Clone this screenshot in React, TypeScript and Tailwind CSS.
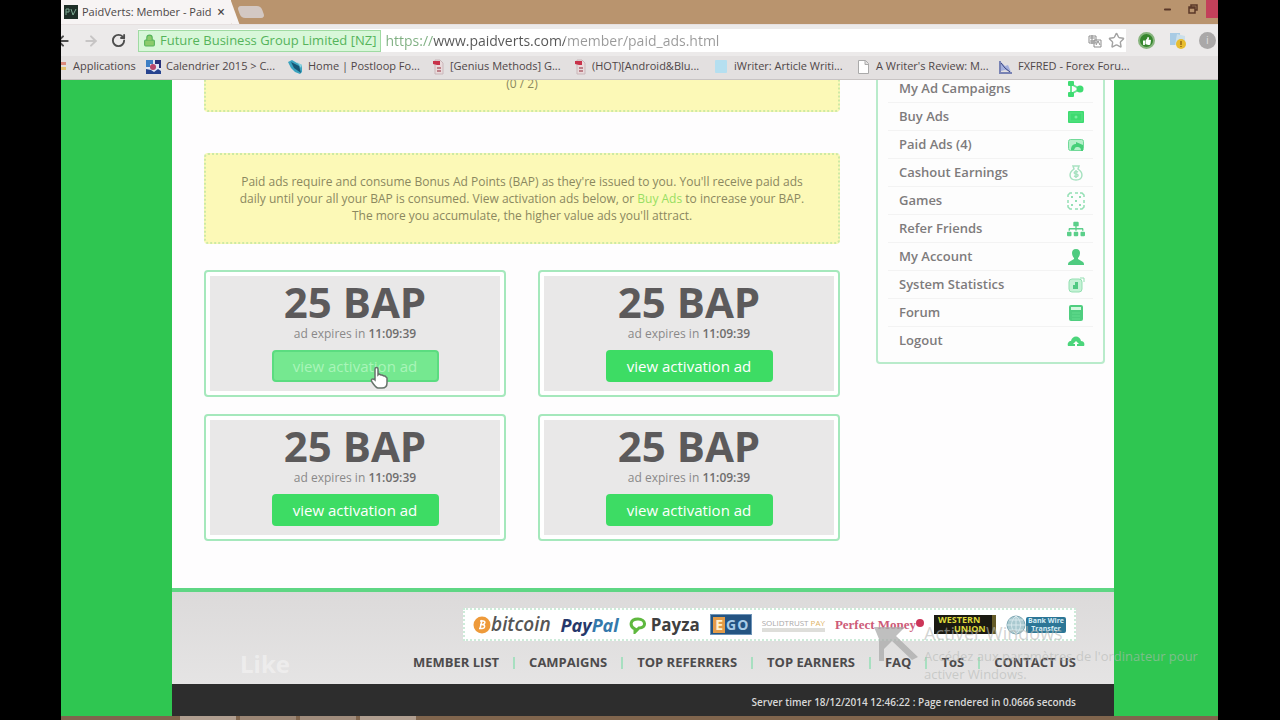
import React from 'react';
import { Lock, Minus, RotateCw, Star, ArrowLeft, ArrowRight } from 'lucide-react';
import { FaSitemap, FaThumbsUp } from 'react-icons/fa';

const bookmarks = [
    { icon: 'calendar', label: 'Calendrier 2015 > C...' },
    { icon: 'bird', label: 'Home | Postloop Fo...' },
    { icon: 'red', label: '[Genius Methods] G...' },
    { icon: 'red', label: '(HOT)[Android&Blu...' },
    { icon: 'cyan', label: 'iWriter: Article Writi...' },
    { icon: 'page', label: "A Writer's Review: M..." },
    { icon: 'chart', label: 'FXFRED - Forex Foru...' },
];

const menu = [
    { icon: 'campaigns', label: 'My Ad Campaigns' },
    { icon: 'buy', label: 'Buy Ads' },
    { icon: 'paid', label: 'Paid Ads (4)' },
    { icon: 'cashout', label: 'Cashout Earnings' },
    { icon: 'games', label: 'Games' },
    { icon: 'refer', label: 'Refer Friends' },
    { icon: 'account', label: 'My Account' },
    { icon: 'stats', label: 'System Statistics' },
    { icon: 'forum', label: 'Forum' },
    { icon: 'logout', label: 'Logout' },
];

const ads = [
    { id: 1, hovered: true },
    { id: 2, hovered: false },
    { id: 3, hovered: false },
    { id: 4, hovered: false },
];

const footerLinks = ['MEMBER LIST', 'CAMPAIGNS', 'TOP REFERRERS', 'TOP EARNERS', 'FAQ', 'ToS', 'CONTACT US'];

function BookmarkIcon({ name }: { name: string }) {
    return (
        <svg viewBox="0 0 16 16" className="size-4 shrink-0" aria-hidden="true">
            {name === 'calendar' && (
                <>
                    <rect x="0" y="1" width="15" height="14" fill="#dfe6f5" />
                    <path d="M0 1h7v4H4v3H0z" fill="#3d7fc4" />
                    <path d="M9 1h6v8h-2V5H9z" fill="#27307a" />
                    <circle cx="7" cy="8" r="3" fill="#b8466b" />
                    <path d="M0 10l5 1 3 2 4-3 3 2v3H0z" fill="#27448f" />
                </>
            )}
            {name === 'bird' && (
                <>
                    <path d="M0 3l4-2 5 3 5 2v7l-2 2-5-2-4-4z" fill="#3ba3bf" />
                    <path d="M3 3l8 4 2 7-7-5z" fill="#175775" />
                    <path d="M9 3l5 3-1 3z" fill="#8ed3e0" />
                </>
            )}
            {name === 'red' && (
                <>
                    <path d="M5 1h5l3 3v11H5z" fill="#e9dadb" stroke="#c9b7ba" />
                    <path d="M3 2h7v4H7L3 5z" fill="#c8324a" />
                    <path d="M7 8h4v2H7zM7 11h4v2H7z" fill="#bd8088" />
                </>
            )}
            {name === 'cyan' && <rect x="1" y="1" width="12" height="13" rx="1" fill="#b5dff0" />}
            {name === 'page' && <path d="M2.500 1.500h7l3 3v10h-10zM9 1.500v4h4" fill="#fff" stroke="#aaa" />}
            {name === 'chart' && (
                <>
                    <path d="M2 2v12h12" fill="none" stroke="#7983b4" strokeWidth="2" />
                    <path d="M3 3l4 4 3-1 3 7-6-2-4 1z" fill="#a4b0dd" />
                    <path d="M3 4l4 5 5 4" stroke="#39437f" fill="none" />
                </>
            )}
        </svg>
    );
}

function MenuIcon({ name }: { name: string }) {
    if (name === 'refer') return <FaSitemap className="size-[18px] text-[#5bcf8a]" />;

    return (
        <svg viewBox="0 0 18 18" className="size-[18px]" aria-hidden="true">
            {name === 'campaigns' && (
                <g fill="#3fdc72">
                    <path d="M4 4l9 5-9 5M4 4v10" fill="none" stroke="#6ae592" strokeWidth="2" />
                    <rect x="1" y="1" width="6" height="5" rx="1" />
                    <rect x="1" y="12" width="6" height="5" rx="1" />
                    <circle cx="13" cy="9" r="3.500" />
                </g>
            )}
            {name === 'buy' && (
                <>
                    <rect x="1" y="3" width="16" height="12" rx="1" fill="#3edb70" />
                    <rect x="3" y="5" width="12" height="8" fill="none" stroke="#58e284" />
                    <circle cx="9" cy="9" r="1.500" fill="#7cec9f" />
                </>
            )}
            {name === 'paid' && (
                <>
                    <rect x="1.500" y="3.500" width="15" height="11" rx="2" fill="#b5f0ca" stroke="#72d999" />
                    <path d="M4 14c0-4 2-6 5-6V6l7 3v6h-2c0-3-1-4-4-4-2 0-2 1-3 3z" fill="#47cf79" />
                </>
            )}
            {name === 'cashout' && (
                <g fill="none" stroke="#a8e2c1" strokeWidth="1.500">
                    <path d="M6 2h6l-1 3c6 4 5 11-2 11s-8-7-2-11z" />
                    <path d="M11 8c-4-2-5 2-2 2s3 4-2 2M9 6v8" />
                </g>
            )}
            {name === 'games' && (
                <g fill="none" stroke="#93dfb4" strokeWidth="1.500">
                    <path d="M1 5V3l2-2h2M8 1h3M13 1h2l2 2v2M17 8v3M17 13v2l-2 2h-2M11 17H8M5 17H3l-2-2v-2M1 11V8" />
                    <path d="M4 5h2M12 5h2M8 9h2M4 13h2M12 13h2" strokeWidth="2" />
                </g>
            )}
            {name === 'account' && (
                <path d="M9 1c3 0 4 2 4 4s-1 4-2 5v1l5 3c1 1 1 2 1 3H1c0-1 0-2 1-3l5-3v-1C6 9 5 7 5 5s1-4 4-4z" fill="#4fcb80" />
            )}
            {name === 'stats' && (
                <>
                    <rect x="2" y="3" width="13" height="13" rx="3" fill="#c5f2d6" stroke="#93dfb1" />
                    <path d="M6 13V9h2V6h3v7z" fill="#51c983" />
                    <path d="M13 2h4v4" fill="none" stroke="#93dfb1" />
                </>
            )}
            {name === 'forum' && (
                <>
                    <rect x="2" y="1" width="14" height="16" rx="2" fill="#4fce7f" />
                    <rect x="4" y="3" width="10" height="3" fill="#d2f7de" />
                    <path d="M5 9h8M5 12h8M5 15h8" stroke="#62dc8e" />
                </>
            )}
            {name === 'logout' && (
                <>
                    <path d="M1 14c-1-3 1-5 3-5 1-6 9-6 10 0 3 0 4 3 3 5z" fill="#4bd57b" />
                    <path d="M9 9l3 3h-2v3H8v-3H6z" fill="#fff" />
                </>
            )}
        </svg>
    );
}

function HandCursor() {
    return (
        <svg viewBox="0 0 20 24" className="absolute left-[97px] top-[15px] h-6 w-5" aria-hidden="true">
            <path
                d="M6 14V4c0-2 3-2 3 0v6l1-1 2 1 1 0 2 1 1 0 2 2v5c0 3-2 5-5 5H9c-2 0-4-3-6-6-2-3 1-4 3-2z"
                fill="#fff"
                stroke="#67736b"
                strokeWidth="1.500"
            />
        </svg>
    );
}

function AdCard({ hovered }: { hovered: boolean }) {
    return (
        <article className="rounded-sm border-2 border-[#a5e8bc] bg-white p-1">
            <div className="flex flex-col items-center bg-[#e9e8e8] pb-[9px]">
                <h2 className="h-[50px] text-[42px] font-bold leading-[52px] text-[#5c5a5b]">25 BAP</h2>
                <p className="text-xs leading-4 text-[#8a8888]">
                    ad expires in <strong className="font-semibold text-[#6f6d6d]">11:09:39</strong>
                </p>
                <div className="relative mt-2">
                    <button
                        type="button"
                        className={
                            hovered
                                ? 'h-8 w-[167px] rounded-sm border-2 border-[#5bdc80] bg-[#75e890] text-[15px] leading-5 text-[#a9f5b9]'
                                : 'h-8 w-[167px] rounded-sm bg-[#3ddc64] text-[15px] leading-5 text-white'
                        }
                    >
                        view activation ad
                    </button>
                    {hovered && <HandCursor />}
                </div>
            </div>
        </article>
    );
}

function BrowserChrome() {
    return (
        <header>
            {/* Title bar */}
            <div className="flex h-6 items-start justify-between bg-[#b9946e]">
                <div className="flex items-center">
                    <div className="flex h-6 items-center bg-[#f7f4f4] pl-[3px] pr-1.5 text-[11px] text-[#4c4646]">
                        <svg viewBox="0 0 14 14" className="size-3.5" aria-hidden="true">
                            <rect width="14" height="14" fill="#1e2f28" />
                            <path d="M2 10V4h3v3H2M7 4l2 6 3-6" fill="none" stroke="#7ba892" />
                        </svg>
                        <span className="ml-1 w-[131px] overflow-hidden whitespace-nowrap">PaidVerts: Member - Paid</span>
                        <button type="button" aria-label="Close tab" className="ml-1 text-sm font-semibold leading-4">
                            ×
                        </button>
                    </div>
                    <div className="-ml-1 h-6 w-2 skew-x-[20deg] bg-[#f7f4f4]" />
                    <button type="button" aria-label="New tab" className="ml-1 h-3 w-6 skew-x-[20deg] rounded-sm bg-[#d3c8c3]" />
                </div>
                <div className="flex h-[18px] items-center text-[#5b3829]">
                    <button type="button" aria-label="Minimize" className="mr-4">
                        <Minus size={9} strokeWidth={5} />
                    </button>
                    <button type="button" aria-label="Restore" className="mr-2">
                        <svg viewBox="0 0 10 10" className="size-2.5">
                            <path d="M3 3V1h6v5H7M1 3h6v6H1zM1 4h6" fill="none" stroke="currentColor" strokeWidth="1.500" />
                        </svg>
                    </button>
                    <button type="button" aria-label="Close" className="h-full w-3 bg-[#c3405a]" />
                </div>
            </div>

            {/* Toolbar */}
            <div className="flex h-8 items-center overflow-hidden border-t border-[#e6e0e0] bg-[#eceaea] text-[#4d4d4d]">
                <button type="button" aria-label="Back" className="-ml-1.5">
                    <ArrowLeft size={16} strokeWidth={3} />
                </button>
                <button type="button" aria-label="Forward" className="ml-3 text-[#c7c5c5]">
                    <ArrowRight size={16} strokeWidth={3} />
                </button>
                <button type="button" aria-label="Reload" className="ml-3">
                    <RotateCw size={15} strokeWidth={3} />
                </button>
                <div className="ml-3 flex h-[23px] min-w-0 flex-1 items-center bg-white">
                    <button
                        type="button"
                        className="flex h-[22px] shrink-0 items-center gap-1 whitespace-nowrap border border-[#9fdaa2] bg-[#d8f7d9] px-1 text-[13px] text-[#55b45b]"
                    >
                        <Lock size={13} className="fill-[#8ccb6c]" />
                        Future Business Group Limited [NZ]
                    </button>
                    <input
                        aria-label="Address"
                        readOnly
                        value="https://www.paidverts.com/member/paid_ads.html"
                        className="ml-1 min-w-0 flex-1 bg-[linear-gradient(90deg,#7dae80_0_48px,#555_48px_180px,#999_180px)] bg-clip-text text-sm text-transparent outline-none"
                    />
                    <svg viewBox="0 0 14 14" className="mr-1.5 size-3.5" aria-hidden="true">
                        <path d="M1 2h7v7H1zM2 4h5M2 7h5M4 1v9M6 6h7v7H6zM8 11l2-4 2 4" fill="none" stroke="#8d8d8d" />
                    </svg>
                    <button type="button" aria-label="Bookmark this page" className="mr-px text-[#a3a3a3]">
                        <Star size={17} />
                    </button>
                </div>
                <button type="button" aria-label="Like extension" className="ml-3 flex size-[17px] items-center justify-center rounded-full border-2 border-[#88b57e] bg-[#36872e]">
                    <FaThumbsUp size={8} color="#fff" />
                </button>
                <button type="button" aria-label="Warnings extension" className="ml-3.5">
                    <svg viewBox="0 0 18 18" className="size-[18px]">
                        <rect x="1" y="1" width="10" height="12" fill="#a9cbe4" />
                        <path d="M8 2l8 2v9H6z" fill="#cbdfea" />
                        <circle cx="12" cy="12" r="5" fill="#e8bd2f" />
                        <path d="M12 9v4M12 14v1" stroke="#9a6a12" strokeWidth="1.500" />
                    </svg>
                </button>
                <button type="button" aria-label="Info extension" className="ml-3 mr-0.5 flex size-[17px] items-center justify-center rounded-full bg-[#aaa8a8] text-[11px] text-[#dedede]">
                    i
                </button>
            </div>

            {/* Bookmarks */}
            <nav className="flex h-6 items-center overflow-hidden border-b border-[#c8c4c4] bg-[#e3e0e0] pb-0.5 text-[11px] text-[#4f4748]">
                <a href="#apps" className="flex w-[85px] shrink-0 items-center gap-1.5">
                    <svg viewBox="0 0 6 12" className="h-3 w-1.5" aria-hidden="true">
                        <path d="M0 1h5v3H0z" fill="#dc8a7c" />
                        <path d="M0 6h5v3H0z" fill="#e3c371" />
                    </svg>
                    Applications
                </a>
                {bookmarks.map((item) => (
                    <a key={item.label} href="#bookmark" className="flex w-[142px] shrink-0 items-center gap-1 whitespace-nowrap">
                        <BookmarkIcon name={item.icon} />
                        {item.label}
                    </a>
                ))}
            </nav>
        </header>
    );
}

function PaymentLogos() {
    return (
        <div className="flex h-[33px] w-[613px] items-center justify-between whitespace-nowrap border-2 border-dotted border-[#cdebd9] bg-white px-2">
            <span className="flex items-center text-[19px] font-semibold italic text-[#555]">
                <svg viewBox="0 0 18 18" className="size-[18px]" aria-hidden="true">
                    <circle cx="9" cy="9" r="8.500" fill="#ee9a3a" />
                    <path d="M7 13l2-9M7 5h3c3 0 2 3 0 3.500H7M9 8.500c4 0 3 4 0 4H6" fill="none" stroke="#fff" strokeWidth="1.500" />
                </svg>
                bitcoin
            </span>
            <span className="text-lg font-bold italic text-[#26386b]">
                Pay<span className="text-[#3479ac]">Pal</span>
            </span>
            <span className="flex items-center gap-1 text-[17px] font-bold text-[#3f3f3f]">
                <svg viewBox="0 0 18 18" className="size-[18px]" aria-hidden="true">
                    <path d="M6 13C0 10 1 3 9 3s9 9 1 9l-4 4z" fill="#fff" stroke="#5fb83f" strokeWidth="3" />
                </svg>
                Payza
            </span>
            <span className="flex h-[21px] w-[42px] items-center justify-center gap-px border border-[#6d93b8] bg-[#245482] text-sm font-bold text-[#a8cce8]">
                <span className="bg-[#e39b48] px-0.5 leading-4 text-[#fff1cf]">E</span>
                <span>G</span>
                <span>O</span>
            </span>
            <span className="flex flex-col text-[8px] leading-[10px] text-[#aaa8a8]">
                <span>
                    SOLIDTRUST <span className="text-[#e0b469]">PAY</span>
                </span>
                <span className="h-1 bg-[#dededa]" />
            </span>
            <span className="flex items-center font-['Liberation_Serif',serif] text-[13px] font-bold text-[#cd5b79]">
                Perfect Money
                <svg viewBox="0 0 8 8" className="mb-1 size-2" aria-hidden="true">
                    <circle cx="4" cy="4" r="4" fill="#cc3558" />
                </svg>
            </span>
            <span className="flex h-[19px] w-[62px] flex-col border-r-4 border-[#655b27] bg-[#1b1a12] pl-1 text-[9px] font-bold leading-[9px] text-[#ded93c]">
                <span>WESTERN</span>
                <span className="pl-4">UNION</span>
            </span>
            <span className="flex items-center">
                <svg viewBox="0 0 20 20" className="size-5" aria-hidden="true">
                    <circle cx="10" cy="10" r="9" fill="#a9c9d0" stroke="#80a9b5" />
                    <path d="M1 10h18M10 1v18M3 5h14M3 15h14M10 1c-6 5-6 13 0 18M10 1c6 5 6 13 0 18" fill="none" stroke="#d7e8ec" />
                </svg>
                <span className="flex h-4 w-10 flex-col items-center rounded-xs bg-[#2c7696] text-[7px] font-bold leading-[8px] text-[#d4edf5]">
                    <span>Bank Wire</span>
                    <span>Transfer</span>
                </span>
            </span>
        </div>
    );
}

function ActivationNotice() {
    return (
        <aside className="absolute bottom-[33px] right-2.5 flex gap-1.5 text-[#b5b8b5]/60">
            <svg viewBox="0 0 44 34" className="mt-1 h-[34px] w-11" aria-hidden="true">
                <path d="M0 0h31l-9 9 22 21-6 3-20-19-8 8v12H5V12z" fill="#a9a9a9" opacity=".75" />
            </svg>
            <div className="w-[284px] whitespace-nowrap">
                <p className="text-lg leading-5">Activer Windows</p>
                <p className="mt-1 text-[13px] leading-[18px]">Accédez aux paramètres de l'ordinateur pour</p>
                <p className="text-[13px] leading-[18px]">activer Windows.</p>
            </div>
        </aside>
    );
}

export default function App() {
    return (
        <div className="min-h-screen bg-black pl-[61px] pr-[62px] font-['Open_Sans',sans-serif]">
            <BrowserChrome />

            <div className="relative bg-[#2fc651] pl-[111px] pr-[104px]">
                <div className="bg-[#fefdfe]">
                    <div className="flex justify-between overflow-hidden pb-[47px] pl-8 pr-[9px]">
                        <main className="mr-9 min-w-0 flex-1">
                            <div className="-mt-5 rounded-sm border-2 border-dotted border-[#cdeaa5] bg-[#fcf9b7] pb-[18px] pt-[13px] text-center text-xs leading-[17px] text-[#8b885f]">
                                (0 / 2)
                            </div>
                            <div className="mt-[41px] rounded-sm border-2 border-dotted border-[#cdeaa5] bg-[#fcf9b7] px-[26px] py-[18px] text-center text-xs leading-[17px] text-[#8b885f]">
                                Paid ads require and consume Bonus Ad Points (BAP) as they're issued to you. You'll receive paid ads
                                daily until your all your BAP is consumed. View activation ads below, or{' '}
                                <a href="#buy" className="text-[#98de63]">
                                    Buy Ads
                                </a>{' '}
                                to increase your BAP. The more you accumulate, the higher value ads you'll attract.
                            </div>

                            <div className="mt-[26px] grid grid-cols-2 gap-x-8 gap-y-[17px]">
                                {ads.map((ad) => (
                                    <AdCard key={ad.id} hovered={ad.hovered} />
                                ))}
                            </div>
                        </main>

                        {/* Member menu */}
                        <nav className="-mt-[7px] w-[229px] shrink-0 self-start rounded-sm border-2 border-[#b9ebcb] bg-[#fdfdfd] px-2.5 pb-2">
                            <ul>
                                {menu.map((item) => (
                                    <li key={item.label} className="border-b border-[#f3f3f3] last:border-b-0">
                                        <a href="#menu" className="flex h-[27px] items-center justify-between pl-[11px] pr-2 text-[13px] font-semibold text-[#7d7b7c]">
                                            {item.label}
                                            <MenuIcon name={item.icon} />
                                        </a>
                                    </li>
                                ))}
                            </ul>
                        </nav>
                    </div>

                    <footer>
                        <div className="relative border-t-4 border-[#5fd684] bg-linear-to-b from-[#dcdada] to-[#e5e4e4] pb-3 pr-[38px] pt-4">
                            <span className="absolute bottom-1 left-[68px] text-2xl font-bold text-white/40">Like</span>
                            <div className="flex flex-col items-end">
                                <PaymentLogos />
                                <ul className="mt-3 flex whitespace-nowrap text-[13px] font-bold leading-[19px] text-[#4d4b4c]">
                                    {footerLinks.map((label) => (
                                        <li key={label} className="flex items-center not-last:after:mx-3.5 not-last:after:h-3 not-last:after:w-0.5 not-last:after:bg-[#a7dfc0] not-last:after:content-['']">
                                            <a href="#footer">{label}</a>
                                        </li>
                                    ))}
                                </ul>
                            </div>
                        </div>
                        <p className="bg-[#2d2d2d] pr-[38px] pt-1 text-right text-[10px] font-semibold leading-7 text-[#d9d9d9]">
                            Server timer 18/12/2014 12:46:22 : Page rendered in 0.0666 seconds
                        </p>
                    </footer>
                </div>
                <ActivationNotice />
            </div>

            {/* Taskbar */}
            <div className="flex h-1 gap-1 bg-[#80654d] pl-[119px]">
                <span className="w-14 bg-[#b09e90]" />
                <span className="w-14 bg-[#9b8675]" />
                <span className="w-14 bg-[#a08c7c]" />
                <span className="w-14 bg-[#b09e90]" />
            </div>
        </div>
    );
}
